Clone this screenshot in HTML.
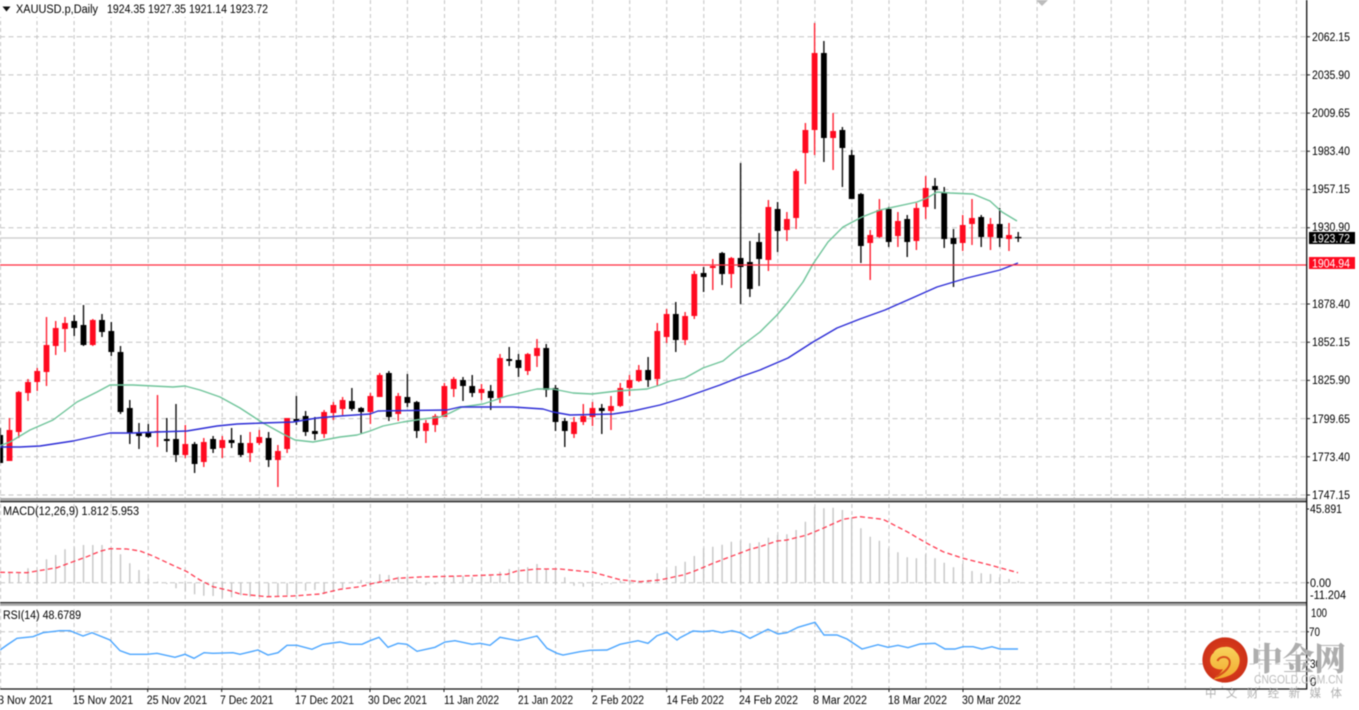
<!DOCTYPE html>
<html lang="zh"><head><meta charset="utf-8"><title>XAUUSD.p,Daily</title>
<style>
html,body{margin:0;padding:0;background:#fff;width:1359px;height:710px;overflow:hidden}
svg{display:block;filter:blur(.45px)}
text{font-family:"Liberation Sans","Noto Sans CJK SC",sans-serif;font-size:11.5px;fill:#000}
</style></head><body>
<svg width="1359" height="710" viewBox="0 0 1359 710" xmlns="http://www.w3.org/2000/svg">
<rect width="1359" height="710" fill="#fff"/>
<!-- vertical grid -->
<path fill="none" stroke="#c4c4c4" stroke-width="1" stroke-dasharray="4 3" d="M0.5 0V689M37 0V689M74.1 0V689M111.1 0V689M148.2 0V689M185.2 0V689M222.2 0V689M259.3 0V689M296.3 0V689M333.4 0V689M370.4 0V689M407.4 0V689M444.5 0V689M481.5 0V689M518.6 0V689M555.6 0V689M592.6 0V689M629.7 0V689M666.7 0V689M703.8 0V689M740.8 0V689M777.8 0V689M814.9 0V689M851.9 0V689M889 0V689M926 0V689M963 0V689M1000.1 0V689M1037.1 0V689M1074.2 0V689M1111.2 0V689M1148.2 0V689M1185.3 0V689M1222.3 0V689M1259.4 0V689M1296.4 0V689"/>
<!-- horizontal grid -->
<path fill="none" stroke="#c4c4c4" stroke-width="1" stroke-dasharray="5 3.5" d="M0 36.7H1307M0 74.9H1307M0 113.1H1307M0 151.3H1307M0 189.5H1307M0 227.7H1307M0 304H1307M0 342.2H1307M0 380.4H1307M0 418.6H1307M0 456.8H1307M0 495H1307M0 582.7H1307M0 631.7H1307M0 664H1307"/>
<!-- MACD histogram -->
<path fill="none" stroke="#c6c6c6" stroke-width="1.4" d="M9.5 583V573.3M18.7 583V573.3M28 583V568.3M37.2 583V570M46.5 583V559.3M55.7 583V555M65 583V549.3M74.2 583V547.3M83.5 583V545M92.8 583V545M102 583V545M111.3 583V548.3M120.5 583V554.3M129.8 583V563.3M139 583V570M148.3 583V578.3M157.5 583V581.7M166.8 583V584M176 583V588.3M185.3 583V591M194.6 583V594.3M203.8 583V595.7M213.1 583V596M222.3 583V597.7M231.6 583V597.3M240.8 583V595.3M250.1 583V596.7M259.3 583V596M268.6 583V596M277.9 583V596M287.1 583V595.3M296.4 583V594M305.6 583V590.7M314.9 583V590M324.1 583V594M333.4 583V591.7M342.6 583V588.3M351.9 583V581.7M361.1 583V580M370.4 583V586.7M379.7 583V574.3M388.9 583V575M398.2 583V576.7M407.4 583V578.3M416.7 583V580M425.9 583V585M435.2 583V584.3M444.4 583V577.7M453.7 583V576M463 583V576M472.2 583V577.3M481.5 583V576M490.7 583V576M500 583V571.7M509.2 583V569M518.5 583V570M527.7 583V567.3M537 583V564M546.2 583V569.3M555.5 583V570M564.8 583V577.3M574 583V585.7M583.3 583V586.7M592.5 583V586.7M601.8 583V585M611 583V584.3M620.3 583V580.7M629.5 583V580M638.8 583V580.7M648.1 583V580M657.3 583V573.3M666.6 583V570M675.8 583V566M685.1 583V561.7M694.3 583V556M703.6 583V548.3M712.8 583V546.7M722.1 583V544.7M731.3 583V541.7M740.6 583V540.7M749.9 583V543.3M759.1 583V542.3M768.4 583V537.7M777.6 583V535M786.9 583V534.3M796.1 583V530M805.4 583V521.7M814.6 583V506.7M823.9 583V508.3M833.1 583V507.7M842.4 583V510M851.7 583V517.3M860.9 583V528.3M870.2 583V536.7M879.4 583V540.7M888.7 583V548.3M897.9 583V552.3M907.2 583V557.3M916.4 583V558.3M925.7 583V554.3M935 583V558.3M944.2 583V562.7M953.5 583V567.3M962.7 583V564M972 583V571M981.2 583V573.3M990.5 583V574M999.7 583V577.3M1009 583V579M1018.2 583V581"/>
<!-- MACD signal -->
<polyline fill="none" stroke="#ff3a50" stroke-width="1.3" stroke-dasharray="5 3" points="0,572.3 27,572.7 37,571 57,567.7 73,561.7 87,556.7 100,551.3 110,548.7 127,549 140,551 153,556 170,564 187,571.7 200,580 213,586.7 230,590.7 240,594 253,595.3 267,596.7 293,596 320,594 340,589.3 360,586.7 370,584 390,580 397,578.3 420,577 473,575.7 507,574.3 517,571 537,569 560,569 593,572.3 603,575 620,579.7 640,581.7 660,580 683,575 693,571.7 713,563.3 733,555.7 750,549.3 760,546.7 777,541 787,540 807,535 823,528.3 843,519.3 860,516.7 883,519.3 907,531.7 927,543.3 943,551.7 963,558.3 990,565 1018,572.7"/>
<!-- RSI -->
<polyline fill="none" stroke="#4aa5ff" stroke-width="1.4" points="0,650 7,645 17,638.3 33,636.7 43,632.7 60,630.7 70,630.7 83,636 92,632.7 110,640 120,650.7 130,654.3 147,654.3 157,653.3 175,657.3 185,654.3 194,658.3 204,652.7 213,653.3 233,652.7 240,654.3 258,650 268,655 278,652.7 287,645.3 297,645.3 312,649.3 323,644.3 340,642 350,644.3 362,644.3 370,640.7 379,637.3 388,647.3 398,643.3 407,644.3 417,651.3 435,647.3 445,642 455,640.7 472,644.3 480,643.3 490,645.3 500,637.3 518,640.7 537,636 547,648.3 557,653.3 563,655 580,651.7 590,650.3 607,650 620,644.3 638,640.7 648,643.3 657,635.7 667,632.3 677,640 680,637.7 693,631 703,631.7 713,630.7 722,632.7 732,630.7 740,632.7 750,638.3 768,629.3 778,634 787,632.7 798,627.3 815,622.3 824,635 837,635 847,639 862,649 878,644.7 888,647.3 898,645.3 908,647.7 920,644 935,643.3 945,649 955,649 963,646.7 973,646.7 982,649 992,646.7 1000,649 1018,649"/>
<!-- bid line -->
<path d="M0 238H1307" stroke="#c9c9c9" stroke-width="1.2" fill="none"/>
<!-- black candles -->
<path fill="none" stroke="#111" stroke-width="1.4" d="M0.2 428V463M74.2 315V336M83.5 305V346M102 314V337M111.3 322V356M120.5 346V414M129.8 400V444M139 423V449M148.3 424V438M166.8 418V452M176 404V462M194.6 442V473M213.1 436V453M231.6 428V448M240.8 435V457M268.6 432V467M296.4 396V425M305.6 411V436M314.9 417V440M351.9 388V411M361.1 407V433M388.9 371V421M407.4 374V407M416.7 401V438M463 377V401M472.2 375V397M490.7 385V410M509.2 347V366M518.5 354V377M546.2 344V397M555.5 385V431M564.8 418V447M601.8 404V434M648.1 357V387M675.8 302V352M703.6 267V292M722.1 252V285M740.6 163V304M749.9 241V297M759.1 233V286M777.6 202V252M823.9 41V162M842.4 127V187M851.7 150V199M860.9 193V263M888.7 207V247M907.2 215V257M935 178V209M944.2 187V248M953.5 229V287M981.2 215V247M999.7 208V247M1018.2 232V242"/>
<path fill="none" stroke="#000" stroke-width="5.8" d="M0.2 435V463M74.2 321V328M83.5 325V345M102 320V332M111.3 331V352M120.5 352V412M129.8 408V433M139 433V436M148.3 433V437M166.8 439V441M176 439V455M194.6 444V464M213.1 439V449M231.6 440V443M240.8 443V455M268.6 438V460M296.4 419V421M305.6 416V432M314.9 431V434M351.9 401V409M361.1 408V412M388.9 373V417M407.4 397V403M416.7 402V431M463 380V386M472.2 386V393M490.7 391V398M509.2 359V361M518.5 360V368M546.2 348V390M555.5 388V422M564.8 421V431M601.8 408V411M648.1 370V380M675.8 314V340M703.6 273V277M722.1 253V274M740.6 258V267M749.9 262V289M759.1 242V259M777.6 209V231M823.9 53V138M842.4 130V148M851.7 155V199M860.9 194V246M888.7 209V242M907.2 219V242M935 186V190M944.2 192V239M953.5 238V244M981.2 217V237M999.7 224V238"/>
<path fill="none" stroke="#000" stroke-width="1.4" d="M1015 237.6H1021.4"/>
<!-- red candles -->
<path fill="none" stroke="#ff2233" stroke-width="1.4" d="M9.5 418V461M18.7 391V438M28 379V401M37.2 368V391M46.5 317V386M55.7 321V355M65 317V352M92.8 319V346M157.5 395V447M185.3 425V458M203.8 438V467M222.3 436V458M250.1 432V462M259.3 430V445M277.9 445V487M287.1 418V453M324.1 410V438M333.4 402V420M342.6 397V415M370.4 393V424M379.7 373V397M398.2 393V421M425.9 420V443M435.2 414V432M444.4 383V417M453.7 377V397M481.5 384V400M500 354V403M527.7 353V375M537 339V367M574 417V438M583.3 404V425M592.5 402V426M611 396V430M620.3 383V407M629.5 375V396M638.8 365V382M657.3 323V386M666.6 309V343M685.1 312V345M694.3 271V319M712.8 259V290M731.3 257V288M768.4 200V271M786.9 212V241M796.1 169V229M805.4 123V184M814.6 23V155M833.1 113V170M870.2 230V280M879.4 199V238M897.9 212V247M916.4 203V250M925.7 176V219M962.7 215V251M972 199V245M990.5 218V250M1009 223V251"/>
<path fill="none" stroke="#ff0a20" stroke-width="5.8" d="M9.5 430V461M18.7 392V432M28 382V393M37.2 371V382M46.5 345V372M55.7 328V346M65 323V329M92.8 320V345M157.5 431V432M185.3 444V455M203.8 442V462M222.3 440V448M250.1 443V453M259.3 437V443M277.9 451V460M287.1 418V449M324.1 412V434M333.4 405V413M342.6 400V409M370.4 396V412M379.7 375V397M398.2 396V414M425.9 423V431M435.2 416V425M444.4 386V417M453.7 379V389M481.5 389V393M500 358V398M527.7 354V371M537 348V356M574 422V434M583.3 416V422M592.5 408V417M611 406V411M620.3 388V406M629.5 380V388M638.8 370V381M657.3 331V379M666.6 314V337M685.1 316V340M694.3 274V316M712.8 266V268M731.3 258V274M768.4 207V260M786.9 219V230M796.1 171V218M805.4 130V153M814.6 53V130M833.1 131V138M870.2 235V243M879.4 210V237M897.9 221V236M916.4 208V241M925.7 188V207M962.7 225V243M972 218V224M990.5 224V237M1009 235V239"/>
<!-- Moving averages -->
<polyline fill="none" stroke="#6fc49a" stroke-width="1.4" stroke-linejoin="round" points="0,445.7 10,442 30,430 53,420 77,402 97,392 110,385 133,385 173,387 185,386 200,390 220,397 240,408 263,423 283,434 295,440 313,442 340,437 357,435 370,431 383,426 403,422 423,419 440,417 450,413 462,407 483,404 507,396 537,389 553,389 573,393 592,394 617,391 647,389 660,385 670,381 685,378 703,368 723,361 740,347 760,332 777,315 788,302 803,282 813,264 828,242 843,227 862,217 880,210 917,202 927,198 937,192 950,193 973,194 990,201 1002,212 1017,221"/>
<polyline fill="none" stroke="#2b2bd6" stroke-width="1.4" stroke-linejoin="round" points="0,447 20,447 40,446 73,441 110,433 133,433 157,432 187,431 217,426 237,424 263,423 293,422 317,418 340,416 370,414 378,411 447,410 460,407 513,407 543,409 553,412 570,415 613,414 633,411 660,405 683,398 720,385 740,377 760,370 788,358 813,342 837,328 860,319 885,310 910,299 937,287 967,278 1000,270 1018,263"/>
<!-- support line -->
<path d="M0 265H1307" stroke="#ff2b3d" stroke-width="1.3" fill="none"/>
<!-- separators & axes -->
<rect x="0" y="498" width="1307" height="3" fill="#a8a8a8"/>
<rect x="0" y="501" width="1307" height="1.3" fill="#222"/>
<rect x="0" y="602" width="1307" height="1.3" fill="#222"/>
<rect x="0" y="603.2" width="1307" height="2.6" fill="#a8a8a8"/>
<path d="M1306.7 0V689.5M0 689H1307" stroke="#111" stroke-width="1.3" fill="none"/>
<path stroke="#222" stroke-width="1" fill="none" d="M1307 36.7h3M1307 74.9h3M1307 113.1h3M1307 151.3h3M1307 189.5h3M1307 227.7h3M1307 304h3M1307 342.2h3M1307 380.4h3M1307 418.6h3M1307 456.8h3M1307 495h3M1307 509h2M1307 582.7h2M1307 631.7h2M1307 664h2M73.7 689v3M147.7 689v3M221.7 689v3M295.7 689v3M370 689v3M444 689v3M518 689v3M592 689v3M666.7 689v3M740.7 689v3M815 689v3M889 689v3M963 689v3"/>
<!-- header -->
<rect x="0" y="0" width="272" height="17" fill="#fff"/>
<path d="M2.5 6.5h8l-4 5z" fill="#111"/>
<text x="16" y="13" textLength="82" lengthAdjust="spacingAndGlyphs">XAUUSD.p,Daily</text>
<text x="107" y="13" textLength="161" lengthAdjust="spacingAndGlyphs">1924.35 1927.35 1921.14 1923.72</text>
<text x="3" y="515" textLength="136" lengthAdjust="spacingAndGlyphs">MACD(12,26,9) 1.812 5.953</text>
<text x="3" y="619" textLength="78" lengthAdjust="spacingAndGlyphs">RSI(14) 48.6789</text>
<!-- price labels -->
<g>
<text x="1312" y="41" textLength="38" lengthAdjust="spacingAndGlyphs">2062.15</text>
<text x="1312" y="79" textLength="38" lengthAdjust="spacingAndGlyphs">2035.90</text>
<text x="1312" y="117" textLength="38" lengthAdjust="spacingAndGlyphs">2009.65</text>
<text x="1312" y="155" textLength="38" lengthAdjust="spacingAndGlyphs">1983.40</text>
<text x="1312" y="193" textLength="38" lengthAdjust="spacingAndGlyphs">1957.15</text>
<text x="1312" y="231" textLength="38" lengthAdjust="spacingAndGlyphs">1930.90</text>
<text x="1312" y="308" textLength="38" lengthAdjust="spacingAndGlyphs">1878.40</text>
<text x="1312" y="346" textLength="38" lengthAdjust="spacingAndGlyphs">1852.15</text>
<text x="1312" y="384" textLength="38" lengthAdjust="spacingAndGlyphs">1825.90</text>
<text x="1312" y="423" textLength="38" lengthAdjust="spacingAndGlyphs">1799.65</text>
<text x="1312" y="461" textLength="38" lengthAdjust="spacingAndGlyphs">1773.40</text>
<text x="1312" y="499" textLength="38" lengthAdjust="spacingAndGlyphs">1747.15</text>
<rect x="1309" y="232" width="46" height="12" fill="#000"/>
<text x="1312" y="242.5" textLength="38" lengthAdjust="spacingAndGlyphs" style="fill:#fff">1923.72</text>
<rect x="1309" y="257" width="46" height="12" fill="#ff0a20"/>
<text x="1312" y="267.5" textLength="38" lengthAdjust="spacingAndGlyphs" style="fill:#fff">1904.94</text>
<text x="1310" y="513" textLength="32" lengthAdjust="spacingAndGlyphs">45.891</text>
<text x="1310" y="587" textLength="21" lengthAdjust="spacingAndGlyphs">0.00</text>
<text x="1310" y="599" textLength="36" lengthAdjust="spacingAndGlyphs">-11.204</text>
<text x="1311" y="617" textLength="16" lengthAdjust="spacingAndGlyphs">100</text>
<text x="1309" y="636" textLength="11" lengthAdjust="spacingAndGlyphs">70</text>
<text x="1310" y="668" textLength="11" lengthAdjust="spacingAndGlyphs">30</text>
<text x="1310" y="686">0</text>
</g>
<!-- date labels -->
<g>
<text x="-2" y="704" textLength="55" lengthAdjust="spacingAndGlyphs">8 Nov 2021</text>
<text x="72.7" y="704" textLength="60.5" lengthAdjust="spacingAndGlyphs">15 Nov 2021</text>
<text x="146.7" y="704" textLength="60.5" lengthAdjust="spacingAndGlyphs">25 Nov 2021</text>
<text x="220" y="704" textLength="53.5" lengthAdjust="spacingAndGlyphs">7 Dec 2021</text>
<text x="295" y="704" textLength="59" lengthAdjust="spacingAndGlyphs">17 Dec 2021</text>
<text x="368" y="704" textLength="59" lengthAdjust="spacingAndGlyphs">30 Dec 2021</text>
<text x="444" y="704" textLength="55" lengthAdjust="spacingAndGlyphs">11 Jan 2022</text>
<text x="518" y="704" textLength="55" lengthAdjust="spacingAndGlyphs">21 Jan 2022</text>
<text x="592" y="704" textLength="52" lengthAdjust="spacingAndGlyphs">2 Feb 2022</text>
<text x="666.5" y="704" textLength="57.5" lengthAdjust="spacingAndGlyphs">14 Feb 2022</text>
<text x="739" y="704" textLength="59" lengthAdjust="spacingAndGlyphs">24 Feb 2022</text>
<text x="813" y="704" textLength="54" lengthAdjust="spacingAndGlyphs">8 Mar 2022</text>
<text x="888" y="704" textLength="59" lengthAdjust="spacingAndGlyphs">18 Mar 2022</text>
<text x="962" y="704" textLength="59" lengthAdjust="spacingAndGlyphs">30 Mar 2022</text>
</g>
<!-- top marker -->
<path d="M1036 0H1048L1042 6Z" fill="#bcbcbc"/>
<!-- watermark -->
<defs><linearGradient id="y" x1="0" y1="0" x2="0" y2="1"><stop offset="0" stop-color="#f8d35c"/><stop offset="1" stop-color="#f2a92e"/></linearGradient>
<radialGradient id="r" cx=".5" cy=".5" r=".6"><stop offset="0" stop-color="#e2481c"/><stop offset="1" stop-color="#c92c17"/></radialGradient></defs>
<circle cx="1225" cy="660" r="22.6" fill="url(#r)"/>
<path d="M1213.3 679.5C1225 678 1234 675 1237.5 668.5C1241 662 1240 656 1236.5 652.5C1233 647.5 1228 646 1224 647C1219 647 1214.5 650 1213.5 653C1209.5 656 1209 663 1212.5 666.5C1216 669.5 1221 670 1223 669C1221 673 1217 676 1213.3 679.5Z" fill="url(#y)"/>
<path d="M1217.5 661C1219 656.5 1227 655 1229.5 660.5C1231 666 1226 672 1216 677" fill="none" stroke="#d8501c" stroke-width="2"/>
<text x="1251" y="670" style="font-family:'Noto Serif CJK SC','Noto Sans CJK SC',serif;font-size:32px;font-weight:900;fill:#adadad" textLength="95" lengthAdjust="spacingAndGlyphs">中金网</text>
<text x="1254" y="683.5" style="font-size:11.5px;fill:#bbb" textLength="89" lengthAdjust="spacingAndGlyphs">CNGOLD.COM.CN</text>
<text x="1205" y="697" style="font-size:11.5px;fill:#b0b0b0;font-family:'Noto Sans CJK SC',sans-serif" textLength="137" lengthAdjust="spacing">中文财经新媒体</text>
</svg>
</body></html>
